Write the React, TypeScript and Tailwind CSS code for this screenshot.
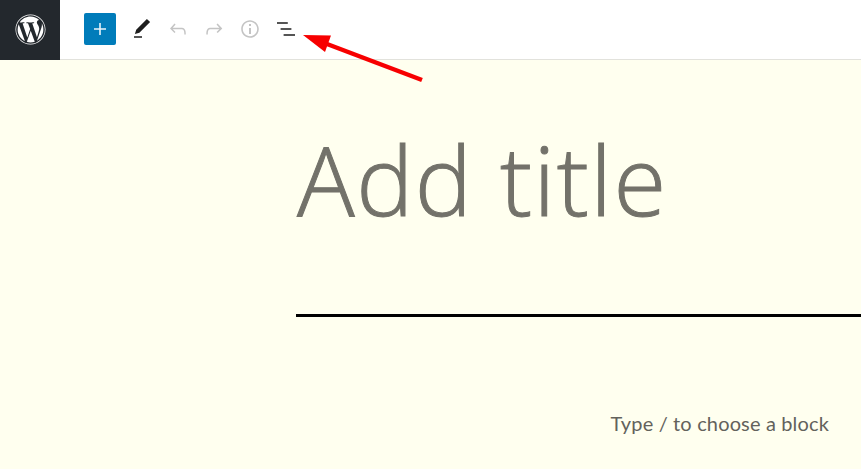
import { FaWordpress } from "react-icons/fa";

const App = () => {
  return (
    <div className="relative h-[469px] w-[861px] overflow-hidden bg-[#ffffef] font-['Lato','Noto_Sans',sans-serif]">
      {/* Top toolbar */}
      <header className="flex h-[60px] items-center border-b border-[#e2e2dc] bg-white">
        <div className="flex h-[60px] w-[60px] items-center justify-center bg-[#23282d] text-white">
          <FaWordpress className="h-[31px] w-[31px]" />
        </div>
        <div className="ml-6 flex items-center">
          <button className="-mt-[2px] flex h-8 w-8 items-center justify-center rounded-[2px] bg-[#007cba]">
            <svg width="24" height="24" viewBox="0 0 24 24" fill="#e8f4fa">
              <path d="M18 11.2h-5.2V6h-1.6v5.2H6v1.6h5.2V18h1.6v-5.2H18z" />
            </svg>
          </button>
          <svg className="-mt-[2px] ml-[14px]" width="24" height="24" viewBox="0 0 24 24" fill="#1e1e1e">
            <path d="M20.1 5.1 16.9 2 6.2 12.7l-1.3 4.4 4.5-1.3L20.1 5.1zM4 20.8h8v-1.5H4v1.5z" />
          </svg>
          <svg className="-mt-[2px] ml-[12px]" width="24" height="24" viewBox="0 0 24 24" fill="#c4c4c4">
            <path d="M18.3 11.7c-.6-.6-1.4-.9-2.3-.9H6.7l2.9-3.3-1.1-1-4.5 5L8.5 16l1-1-2.7-2.7H16c.5 0 .9.2 1.3.5 1 1 1 3.4 1 4.5v.3h1.5v-.2c0-1.5 0-4.3-1.5-5.7z" />
          </svg>
          <svg className="-mt-[2px] ml-[12px]" width="24" height="24" viewBox="0 0 24 24" fill="#c4c4c4">
            <path d="M15.6 6.5l-1.1 1 2.9 3.3H8c-.9 0-1.7.3-2.3.9-1.4 1.5-1.4 4.2-1.4 5.6v.2h1.5v-.3c0-1.1 0-3.5 1-4.5.3-.3.7-.5 1.3-.5h9.2L14.6 15l1.1 1.1 4.6-4.6-4.7-5z" />
          </svg>
          <svg className="-mt-[2px] ml-[12px]" width="24" height="24" viewBox="0 0 24 24" fill="#c4c4c4">
            <path d="M12 3.2c-4.8 0-8.8 3.9-8.8 8.8 0 4.8 3.9 8.8 8.8 8.8 4.8 0 8.8-3.9 8.8-8.8 0-4.8-4-8.8-8.8-8.8zm0 16c-4 0-7.2-3.3-7.2-7.2C4.8 8 8 4.8 12 4.8s7.2 3.3 7.2 7.2c0 4-3.2 7.2-7.2 7.2zM11 17h2v-6h-2v6zm0-8h2V7h-2v2z" />
          </svg>
          <svg className="-mt-[2px] ml-[12px]" width="24" height="24" viewBox="0 0 24 24" fill="#1e1e1e">
            <path d="M13.8 5.2H3v1.5h10.8V5.2zm-3.6 6H6.6v1.5h10.8v-1.5h-7.2zm4.8 6H9.6v1.5H21v-1.5h-6z" />
          </svg>
        </div>
      </header>

      {/* Editor canvas */}
      <main className="flex flex-col pl-[296px]">
        <h1 className="mt-[60px] h-[130px] pl-[1px] font-['Open_Sans',sans-serif] text-[96px] leading-[118px] font-light tracking-[1.5px] text-[#73726a] [-webkit-text-stroke:1px_#73726a]">Add title</h1>
        <div className="mt-[64px] h-[3px] bg-black" />
        <p className="mt-[91px] pr-[32px] text-right text-[20px] leading-[30px] tracking-[0.15px] text-[#63625c]">Type / to choose a block</p>
      </main>

      {/* Annotation arrow */}
      <svg className="absolute top-0 left-0" width="861" height="100" viewBox="0 0 861 100">
        <path d="M422 80 327 44" stroke="#f70000" strokeWidth="4.5" fill="none" />
        <path d="M303 35 331 35.5 325 52z" fill="#f70000" />
      </svg>
    </div>
  );
};

export default App;
